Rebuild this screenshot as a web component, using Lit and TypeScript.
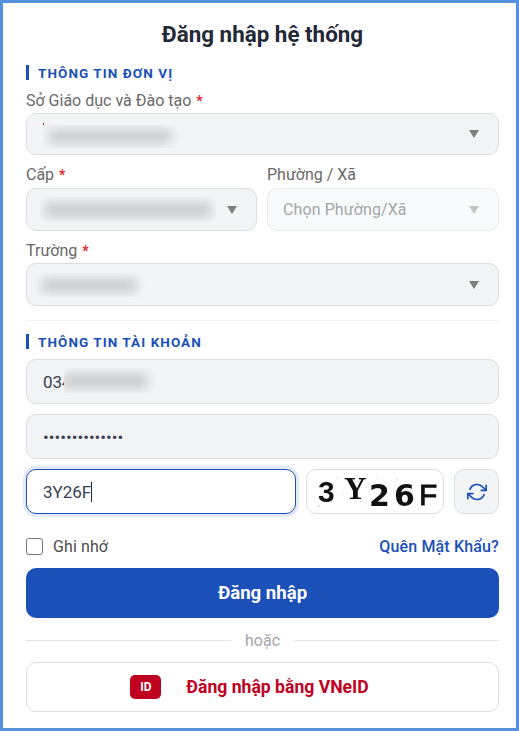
import { LitElement, html, css, svg } from "lit";
import { customElement } from "lit/decorators.js";

const caret = html`<svg class="caret" width="10" height="8" viewBox="0 0 10 8"><path d="M0 0H10L5 8Z" fill="currentColor"/></svg>`;
const dots: [number, number, number][] = [[30,8,.8],[48,30,.7],[12,36,.9],[62,14,.6],[76,36,.7],[90,9,.7],[104,20,.8],[112,33,.7],[125,7,.6],[131,26,.8],[36,24,.6],[98,38,.6],[58,37,.5],[120,14,.6],[70,8,.6]];
function svgDot(x: number, y: number, r: number) {
  return svg`<circle cx=${x} cy=${y} r=${r} fill="#d4d4d4" />`;
}

@customElement("app-root")
export class AppRoot extends LitElement {
  static styles = css`
    :host { display: block; width: 519px; height: 731px; box-sizing: border-box; border: 3px solid #5591dc; background: #fff; font-family: Roboto, "Noto Sans", sans-serif; color: #1f2937; overflow: hidden; }
    * { box-sizing: border-box; }
    .card { padding: 0 17px 0 23px; display: flex; flex-direction: column; }
    h1 { margin: 16px 0 0; height: 31px; line-height: 31px; font-size: 22.4px; font-weight: 700; text-align: center; color: #1f2937; }
    .section { display: flex; align-items: center; height: 15px; border-left: 3px solid #1a50b8; padding-left: 9px; font-size: 13.5px; font-weight: 700; letter-spacing: 1.06px; color: #1a50b8; white-space: nowrap; }
    .s1 { margin-top: 15px; }
    .s2 { margin-top: 13px; }
    label.f { display: block; height: 19px; line-height: 19px; font-size: 16px; color: #696969; white-space: nowrap; }
    .req { color: #e5202e; font-size: 14px; font-weight: 700; margin-left: 1px; }
    .select { position: relative; display: flex; align-items: center; border: 1px solid #dcdee1; border-radius: 10px; background: #f3f4f6; height: 43px; color: #7f7f7f; }
    .caret { position: absolute; right: 19px; top: 50%; margin-top: -4px; }
    .lbl1 { margin-top: 11px; }
    .sp3 { margin-top: 3px; }
    .sp { margin-top: 4px; }
    .h42 { height: 42px; }
    .row { display: grid; grid-template-columns: 231px 232px; gap: 10px; margin-top: 10px; }
    .lbl3 { margin-top: 10px; }
    .disabled { background: #f9fafb; border-color: #e9eaec; color: #c4c4c4; }
    .disabled .txt { padding-left: 15px; color: #a3a6ab; font-size: 16px; letter-spacing: .1px; }
    .blur { position: absolute; overflow: hidden; background: #f4f5f6; }
    .blur i { display: block; position: absolute; background: #c6c7c9; filter: blur(6px); border-radius: 4px; }
    .b1 { left: 16px; top: 11px; width: 139px; height: 23px; }
    .b1 i { left: 5px; top: 5px; width: 124px; height: 13px; }
    .b2 { left: 13px; top: 8px; width: 176px; height: 25px; }
    .b2 i { left: 4px; top: 6px; width: 168px; height: 14px; }
    .b3 { left: 6px; top: 9px; width: 114px; height: 24px; }
    .b3 i { left: 8px; top: 6px; width: 96px; height: 13px; }
    .b4 { left: 37px; top: 8px; width: 96px; height: 25px; }
    .b4 i { left: -2px; top: 6px; width: 86px; height: 14px; }
    .speck { position: absolute; left: 16px; top: 9px; width: 1px; height: 2px; background: #7a3a3a; }
    hr { border: 0; height: 1px; background: #eff0f2; margin: 14px 0 0; width: 100%; }
    .input { position: relative; display: flex; align-items: center; height: 45px; border: 1px solid #dcdee1; border-radius: 10px; background: #f3f4f6; padding-left: 16px; font-size: 17px; color: #374151; margin-top: 10px; }
    .pw { font-size: 17px; font-weight: 400; }
    .captcha { display: grid; grid-template-columns: 270px 138px 45px; gap: 10px; margin-top: 10px; height: 45px; }
    .cinput { display: flex; align-items: center; border: 1px solid #1a50b8; border-radius: 10px; background: #fff; padding-left: 16px; font-size: 17px; color: #374151; box-shadow: 0 0 0 3px #e3eaf6; }
    .cursor { display: inline-block; width: 1px; height: 20px; background: #1f2937; }
    .cimg { position: relative; border: 1px solid #dcdee1; border-radius: 10px; background: #fff; overflow: hidden; color: #111; }
    .cimg svg { position: absolute; inset: 0; }
    .cimg span { position: absolute; line-height: 1; filter: blur(.4px); }
    .c3 { left: 11px; top: 7px; font: 700 30px "Liberation Sans", sans-serif; }
    .cY { left: 37px; top: 3px; font: 700 31px "Liberation Serif", serif; }
    .c2 { left: 62px; top: 11px; font: 700 30px "DejaVu Sans", sans-serif; }
    .c6 { left: 87px; top: 11px; font: 700 30px "DejaVu Sans", sans-serif; }
    .cF { left: 112px; top: 10px; font: 400 30px "Liberation Sans", sans-serif; -webkit-text-stroke: .8px #111; }
    .refresh { display: flex; align-items: center; justify-content: center; border: 1px solid #dcdee1; border-radius: 10px; background: #f3f4f6; color: #1a50b8; }
    .opts { display: flex; align-items: center; justify-content: space-between; margin-top: 20px; height: 24px; }
    .check { display: flex; align-items: center; gap: 10px; font-size: 16px; letter-spacing: .1px; color: #4b4b4b; }
    .box { width: 17px; height: 17px; border: 1.5px solid #767676; border-radius: 3px; background: #fff; }
    .forgot { font-size: 16px; font-weight: 500; letter-spacing: .15px; color: #1a50b8; }
    .login { display: flex; align-items: center; justify-content: center; height: 50px; margin-top: 10px; border-radius: 10px; background: #1a50b8; color: #fff; font-size: 18.6px; font-weight: 700; }
    .or { display: flex; align-items: center; gap: 14px; height: 20px; margin-top: 12px; font-size: 16px; color: #a3a6ab; }
    .or::before, .or::after { content: ""; flex: 1; height: 1px; background: #e3e4e6; }
    .vneid { display: flex; align-items: center; justify-content: center; gap: 25px; height: 50px; margin-top: 12px; padding-right: 26px; border: 1px solid #dcdee1; border-radius: 10px; background: #fff; color: #c0001f; font-size: 17.6px; font-weight: 700; }
    .badge { display: flex; align-items: center; justify-content: center; width: 31px; height: 24px; border-radius: 5px; background: #c0001f; color: #fff; font-size: 12px; font-weight: 700; }
  `;

  render() {
    return html`<div class="card">
      <h1>Đăng nhập hệ thống</h1>
      <div class="section s1">THÔNG TIN ĐƠN VỊ</div>
      <label class="f lbl1">Sở Giáo dục và Đào tạo <span class="req">*</span></label>
      <div class="select sp3 h42"><div class="speck"></div><div class="blur b1"><i></i></div>${caret}</div>
      <div class="row">
        <div>
          <label class="f">Cấp <span class="req">*</span></label>
          <div class="select sp"><div class="blur b2"><i></i></div>${caret}</div>
        </div>
        <div>
          <label class="f">Phường / Xã</label>
          <div class="select sp disabled"><span class="txt">Chọn Phường/Xã</span>${caret}</div>
        </div>
      </div>
      <label class="f lbl3">Trường <span class="req">*</span></label>
      <div class="select sp3"><div class="blur b3"><i></i></div>${caret}</div>
      <hr />
      <div class="section s2">THÔNG TIN TÀI KHOẢN</div>
      <div class="input">034<div class="blur b4"><i></i></div></div>
      <div class="input pw">••••••••••••••</div>
      <div class="captcha">
        <div class="cinput">3Y26F<span class="cursor"></span></div>
        <div class="cimg">
          <svg width="136" height="43" viewBox="0 0 136 43">${dots.map(([x, y, r]) => svgDot(x, y, r))}</svg>
          <span class="c3">3</span><span class="cY">Y</span><span class="c2">2</span><span class="c6">6</span><span class="cF">F</span>
        </div>
        <div class="refresh">
          <svg width="20" height="20" viewBox="0 0 24 24" fill="none" stroke="currentColor" stroke-width="2" stroke-linecap="round" stroke-linejoin="round"><polyline points="23 4 23 10 17 10"/><polyline points="1 20 1 14 7 14"/><path d="M3.51 9a9 9 0 0 1 14.85-3.36L23 10M1 14l4.64 4.36A9 9 0 0 0 20.49 15"/></svg>
        </div>
      </div>
      <div class="opts">
        <div class="check"><span class="box"></span>Ghi nhớ</div>
        <span class="forgot">Quên Mật Khẩu?</span>
      </div>
      <div class="login">Đăng nhập</div>
      <div class="or">hoặc</div>
      <div class="vneid"><span class="badge">ID</span><span>Đăng nhập bằng VNeID</span></div>
    </div>`;
  }
}
